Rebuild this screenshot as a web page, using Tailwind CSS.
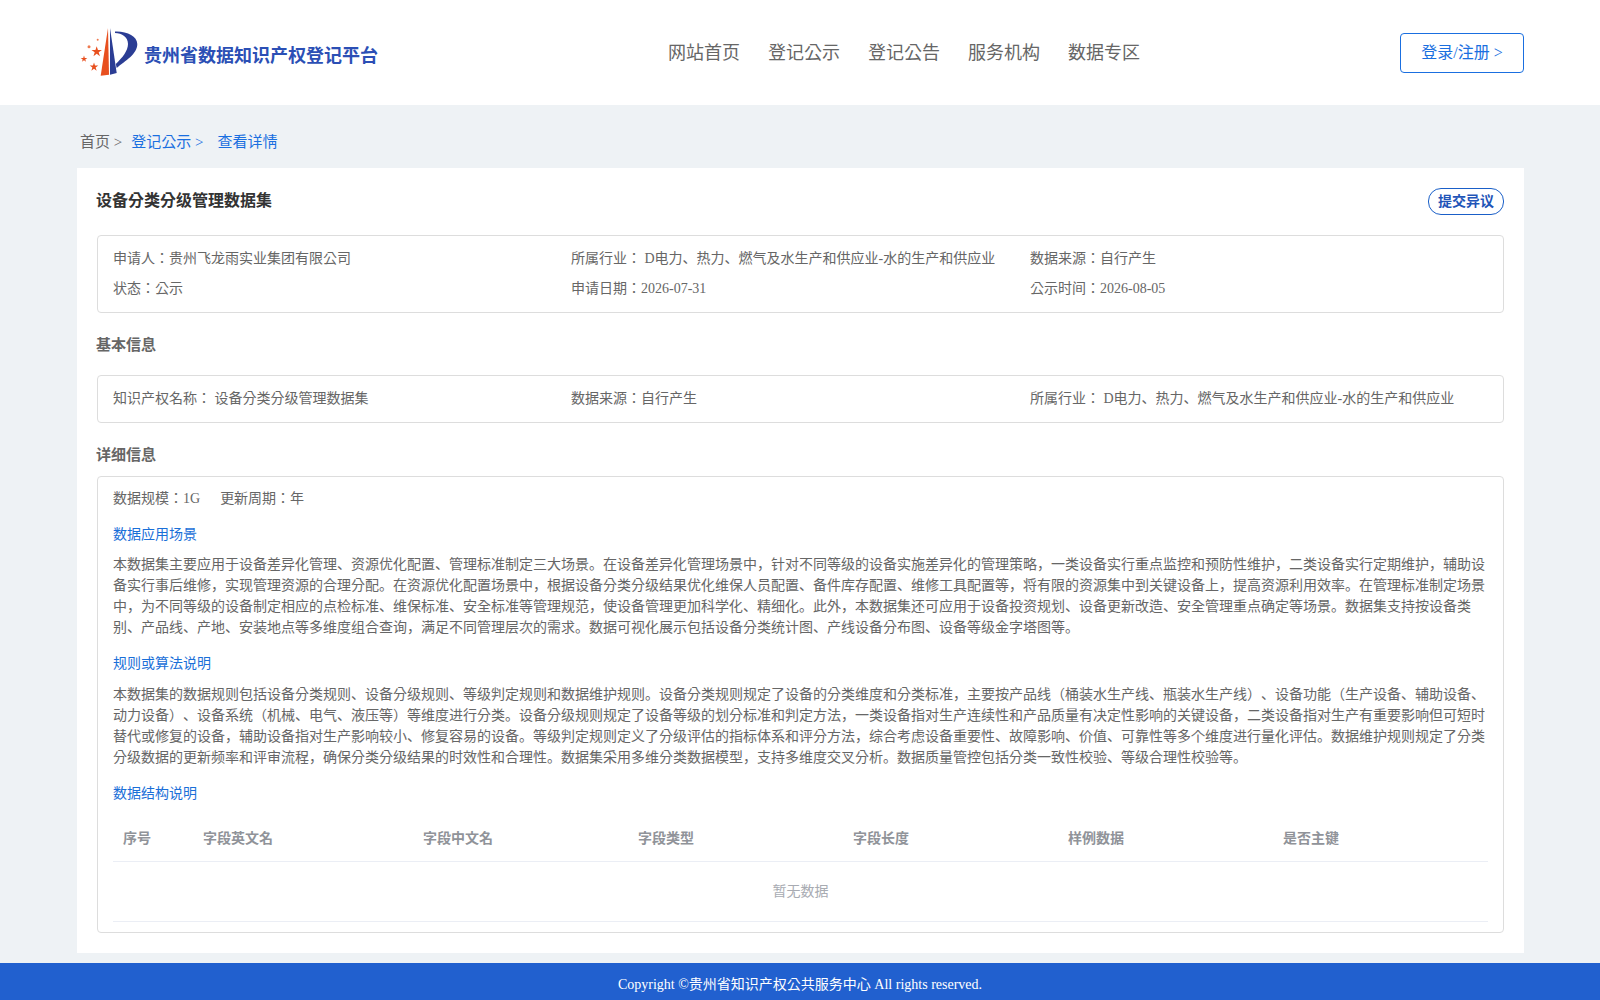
<!DOCTYPE html>
<html>
<head>
<meta charset="utf-8">
<title>设备分类分级管理数据集</title>
<script src="https://cdn.jsdelivr.net/npm/@tailwindcss/browser@4"></script>
</head>
<body class="bg-[#eef2f5] font-['Liberation_Serif','Noto_Sans_CJK_KR',serif] text-[14px] text-[#666] [text-spacing-trim:space-all]">
<div class="w-[1600px] h-[1000px] overflow-hidden flex flex-col">
  <header class="h-[105px] shrink-0 bg-white flex items-center pl-[80px] pr-[76px] justify-between relative">
    <div class="flex items-center gap-[6px] w-[300px]">
      <svg class="w-[58px] h-[52px] shrink-0" viewBox="0 0 58 52">
        <polygon points="28,1 20.700,48.700 29,47.700" fill="#e8501f"/>
        <polygon points="30,1 36.700,46 30,47.700" fill="#2b3d94"/>
        <path d="M35 4.500 C47 4 57 9 57.300 17 C57.500 27 45 34 36.700 41 L35.800 37 C42 31 48 24 48 17 C48 10 42 6 35 6 Z" fill="#2b3d94"/>
        <polygon transform="translate(16.700 24.700) scale(5.500)" points="0,-1 .225,-.309 .951,-.309 .363,.118 .588,.809 0,.382 -.588,.809 -.363,.118 -.951,-.309 -.225,-.309" fill="#e8501f"/>
        <polygon transform="translate(4 32) scale(3.500)" points="0,-1 .225,-.309 .951,-.309 .363,.118 .588,.809 0,.382 -.588,.809 -.363,.118 -.951,-.309 -.225,-.309" fill="#e8501f"/>
        <polygon transform="translate(14 40) scale(4.500)" points="0,-1 .225,-.309 .951,-.309 .363,.118 .588,.809 0,.382 -.588,.809 -.363,.118 -.951,-.309 -.225,-.309" fill="#e8501f"/>
        <circle cx="9" cy="19.700" r="1.500" fill="#ee7a50"/>
        <circle cx="17.700" cy="12.700" r="1" fill="#ee7a50"/>
      </svg>
      <span class="text-[18px] leading-[24px] font-bold text-[#2b4fb5] whitespace-nowrap mt-[7px]">贵州省数据知识产权登记平台</span>
    </div>
    <nav class="absolute left-[668px] top-[40px] flex gap-[28px] text-[18px] leading-[26px] text-[#666]">
      <a>网站首页</a><a>登记公示</a><a>登记公告</a><a>服务机构</a><a>数据专区</a>
    </nav>
    <a class="w-[124px] h-[40px] border border-[#1a6fe0] rounded-[4px] flex items-center justify-center text-[16px] text-[#1a6fe0] pt-[1px]">登录/注册 &gt;</a>
  </header>

  <div class="h-[63px] shrink-0 pl-[80px] flex items-center text-[15px] pt-[12px]">
    <span class="text-[#666]">首页 &gt;</span>
    <span class="ml-[9px] text-[#1a6fe0]">登记公示 &gt;</span>
    <span class="ml-[14px] text-[#1a6fe0]">查看详情</span>
  </div>

  <main class="mx-[77px] w-[1447px] h-[785px] shrink-0 bg-white px-[20px] pt-[20px]">
    <div class="flex justify-between items-start h-[47px]">
      <h1 class="text-[16px] leading-[24px] font-bold text-[#333] -ml-[1px] mt-[1px]">设备分类分级管理数据集</h1>
      <a class="h-[27px] w-[76px] border border-[#1a5fc8] rounded-[13px] flex items-center justify-center text-[14px] font-bold text-[#1f55b8]">提交异议</a>
    </div>

    <div class="border border-[#ddd] rounded-[4px] h-[78px] px-[15px] pt-[8px] grid grid-cols-[458px_459px_1fr] content-start leading-[30px]">
      <div>申请人：贵州飞龙雨实业集团有限公司</div>
      <div>所属行业： D电力、热力、燃气及水生产和供应业-水的生产和供应业</div>
      <div>数据来源：自行产生</div>
      <div>状态：公示</div>
      <div>申请日期：2026-07-31</div>
      <div>公示时间：2026-08-05</div>
    </div>

    <h2 class="mt-[21px] -ml-[1px] h-[41px] text-[15px] leading-[22px] font-bold text-[#666]">基本信息</h2>

    <div class="border border-[#ddd] rounded-[4px] h-[48px] px-[15px] pt-[8px] grid grid-cols-[458px_459px_1fr] content-start leading-[30px]">
      <div>知识产权名称： 设备分类分级管理数据集</div>
      <div>数据来源：自行产生</div>
      <div>所属行业： D电力、热力、燃气及水生产和供应业-水的生产和供应业</div>
    </div>

    <h2 class="mt-[21px] -ml-[1px] h-[32px] text-[15px] leading-[22px] font-bold text-[#666]">详细信息</h2>

    <div class="border border-[#ddd] rounded-[4px] h-[457px] px-[15px] pt-[7px]">
      <div class="leading-[30px] flex gap-[20px]"><span>数据规模：1G</span><span>更新周期：年</span></div>
      <h3 class="mt-[6px] leading-[30px] text-[#1a6fd8]">数据应用场景</h3>
      <p class="mt-[4px] leading-[21px]">本数据集主要应用于设备差异化管理、资源优化配置、管理标准制定三大场景。在设备差异化管理场景中，针对不同等级的设备实施差异化的管理策略，一类设备实行重点监控和预防性维护，二类设备实行定期维护，辅助设备实行事后维修，实现管理资源的合理分配。在资源优化配置场景中，根据设备分类分级结果优化维保人员配置、备件库存配置、维修工具配置等，将有限的资源集中到关键设备上，提高资源利用效率。在管理标准制定场景中，为不同等级的设备制定相应的点检标准、维保标准、安全标准等管理规范，使设备管理更加科学化、精细化。此外，本数据集还可应用于设备投资规划、设备更新改造、安全管理重点确定等场景。数据集支持按设备类别、产品线、产地、安装地点等多维度组合查询，满足不同管理层次的需求。数据可视化展示包括设备分类统计图、产线设备分布图、设备等级金字塔图等。</p>
      <h3 class="mt-[11px] leading-[30px] text-[#1a6fd8]">规则或算法说明</h3>
      <p class="mt-[5px] leading-[21px]">本数据集的数据规则包括设备分类规则、设备分级规则、等级判定规则和数据维护规则。设备分类规则规定了设备的分类维度和分类标准，主要按产品线（桶装水生产线、瓶装水生产线）、设备功能（生产设备、辅助设备、动力设备）、设备系统（机械、电气、液压等）等维度进行分类。设备分级规则规定了设备等级的划分标准和判定方法，一类设备指对生产连续性和产品质量有决定性影响的关键设备，二类设备指对生产有重要影响但可短时替代或修复的设备，辅助设备指对生产影响较小、修复容易的设备。等级判定规则定义了分级评估的指标体系和评分方法，综合考虑设备重要性、故障影响、价值、可靠性等多个维度进行量化评估。数据维护规则规定了分类分级数据的更新频率和评审流程，确保分类分级结果的时效性和合理性。数据集采用多维分类数据模型，支持多维度交叉分析。数据质量管控包括分类一致性校验、等级合理性校验等。</p>
      <h3 class="mt-[11px] leading-[30px] text-[#1a6fd8]">数据结构说明</h3>
      <div class="mt-[6px] grid grid-cols-[90px_220px_215px_215px_215px_215px_1fr] h-[47px] items-center border-b border-[#ebeef5] font-bold text-[#909399]">
        <div class="pl-[10px]">序号</div><div>字段英文名</div><div>字段中文名</div><div>字段类型</div><div>字段长度</div><div>样例数据</div><div>是否主键</div>
      </div>
      <div class="h-[60px] flex items-center justify-center border-b border-[#ebeef5] text-[#a8abb2]">暂无数据</div>
    </div>
  </main>

  <footer class="mt-[10px] h-[37px] shrink-0 bg-[#2160cf] text-white text-[14px] flex items-center justify-center pt-[6px]">Copyright ©贵州省知识产权公共服务中心 All rights reserved.</footer>
</div>
</body>
</html>
